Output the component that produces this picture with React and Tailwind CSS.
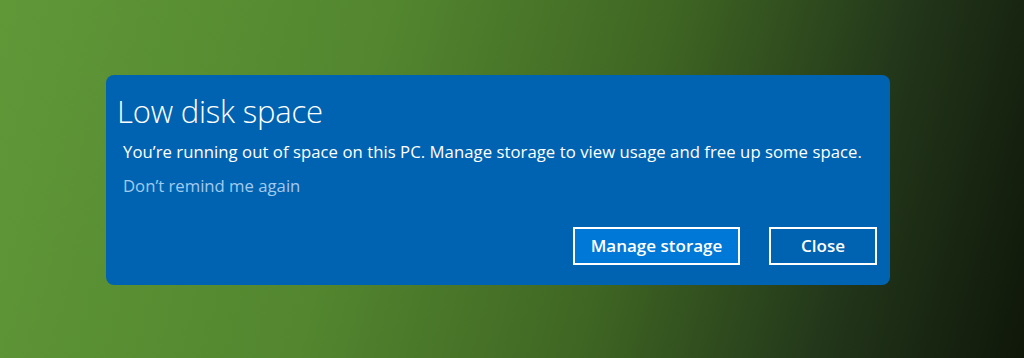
import React from 'react'

export default function App() {
  return (
    <div
      className="w-[1024px] h-[358px] flex items-start justify-center pt-[75px] bg-[linear-gradient(105deg,#609838_0%,#53862f_35%,#3f6623_60%,#22361a_82%,#0f1709_100%)]"
      style={{ fontFamily: '"Open Sans", "Noto Sans", sans-serif' }}
    >
      <div className="w-[784px] h-[210px] -ml-[28px] rounded-[8px] bg-[#0063b1] text-white flex flex-col">
        <h1 className="pl-[11px] pt-[16px] text-[31px] leading-[40px] font-light tracking-[-0.2px]">
          Low disk space
        </h1>
        <p className="pl-[17px] mt-[10px] text-[16.7px] leading-[22px] tracking-[0.05px]">
          You’re running out of space on this PC. Manage storage to view usage and free up some space.
        </p>
        <p className="pl-[17px] mt-[12px] text-[16.7px] leading-[22px] text-[#a3cbef]">
          Don’t remind me again
        </p>
        <div className="mt-auto mb-[20px] pr-[13px] flex justify-end gap-[29px]">
          <button className="w-[167px] h-[38px] border-2 border-white bg-[#0078d7] text-[17px] font-semibold">
            Manage storage
          </button>
          <button className="w-[108px] h-[38px] border-2 border-white bg-[#0063b1] text-[17px] font-semibold">
            Close
          </button>
        </div>
      </div>
    </div>
  )
}
